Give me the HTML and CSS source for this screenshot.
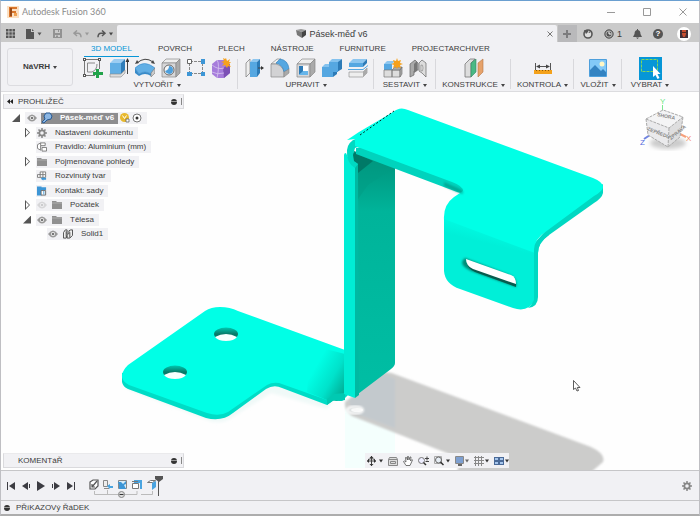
FILE: index.html
```
<!DOCTYPE html>
<html lang="cs">
<head>
<meta charset="utf-8">
<title>Autodesk Fusion 360</title>
<link rel="stylesheet" href="styles.css">
</head>
<body>
<div class="app">
  <header class="titlebar">
    <svg class="logo" width="12" height="12" viewBox="0 0 12 12"><path fill="#fbe0c4" d="M0 0h12v12H0z"/><path fill="#d9762c" d="M2 1h8v2H5v2h4v2H5v4H2z"/><path fill="#9a4a18" d="M3 2h2v8H3z"/><path fill="#f0a050" d="M7 7h3v3H7z"/></svg>
    <span class="app-name">Autodesk Fusion 360</span>
    <div class="window-buttons">
      <button aria-label="Minimalizovat"><svg width="8" height="8" viewBox="0 0 8 8"><path class="thin" d="M0 4.500h8"/></svg></button>
      <button aria-label="Maximalizovat"><svg width="8" height="8" viewBox="0 0 8 8"><path class="thin" d="M.5.5h7v7h-7z"/></svg></button>
      <button aria-label="Zavřít"><svg width="8" height="8" viewBox="0 0 8 8"><path class="thin" d="M.5.5l7 7M7.500.5l-7 7"/></svg></button>
    </div>
  </header>

  <div class="tabbar">
    <div class="quick">
      <button aria-label="Datový panel"><svg width="9" height="9" viewBox="0 0 9 9"><path fill="#555" d="M0 0h2.500v2.500H0zM3.300 0h2.500v2.500H3.300zM6.500 0H9v2.500H6.500zM0 3.300h2.500v2.500H0zM3.300 3.300h2.500v2.500H3.300zM6.500 3.300H9v2.500H6.500zM0 6.500h2.500V9H0zM3.300 6.500h2.500V9H3.300zM6.500 6.500H9V9H6.500z"/></svg></button>
      <button aria-label="Soubor"><svg width="17" height="10" viewBox="0 0 17 10"><path fill="#555" d="M0 0h5v3h3v7H0zM6 0l2 2H6z"/><path fill="#555" d="M11.500 3.500h4l-2 3z"/></svg></button>
      <button aria-label="Uložit"><svg width="9" height="9" viewBox="0 0 9 9"><path fill="#929292" fill-rule="evenodd" d="M0 0h9v9H0zM2 1v3h5V1zM2 6v2h5V6z"/><path fill="#929292" d="M5 1h1v2H5zM3 6.500h2V8H3z"/></svg></button>
      <button aria-label="Zpět"><svg width="17" height="8" viewBox="0 0 17 8"><path fill="none" stroke="#999" stroke-width="1.500" d="M4 .5L1 3.200 4 6M1 3.200h4q3 0 3 4"/><path fill="#999" d="M12 2.500h4l-2 3z"/></svg></button>
      <button aria-label="Znovu"><svg width="17" height="8" viewBox="0 0 17 8"><path fill="none" stroke="#555" stroke-width="1.500" d="M5 .5l3 2.700L5 6M8 3.200H4q-3 0-3 4"/><path fill="#444" d="M12 2.500h4l-2 3z"/></svg></button>
    </div>
    <div class="doc-tab">
      <span class="doc-title"><svg width="10" height="9" viewBox="0 0 10 9"><path fill="#999" d="M0 1l5-1 5 1-4 2z"/><path fill="#777" d="M0 1l6 2v6L1 6z"/><path fill="#444" d="M6 3l4-2v5L6 9z"/></svg>Pásek-měď v6</span>
      <button class="tab-close" aria-label="Zavřít kartu"><svg width="6" height="6" viewBox="0 0 6 6"><path fill="none" stroke="#777" d="M.5.5l5 5M5.500.5l-5 5"/></svg></button>
    </div>
    <button class="new-tab" aria-label="Nový návrh"><svg width="8" height="8" viewBox="0 0 8 8"><path fill="#7c7c7e" d="M3 0h2v3h3v2H5v3H3V5H0V3h3z"/></svg></button>
    <div class="account">
      <button aria-label="Rozšíření"><svg width="10" height="10" viewBox="0 0 10 10"><circle cx="5" cy="5" r="4" fill="#ddd" stroke="#555" stroke-width="1.600"/><path fill="#555" d="M1 1h4v2L3 5zM5 3l3-1-1 2z"/></svg></button>
      <button class="jobs"><svg width="10" height="10" viewBox="0 0 10 10"><circle cx="5" cy="5" r="4.200" fill="#777" stroke="#555"/><circle cx="5" cy="5" r="3" fill="#555" stroke="#ccc" stroke-width=".7"/><path fill="none" stroke="#fff" d="M5 2.500V5h2.500"/></svg>1</button>
      <button aria-label="Oznámení"><svg width="9" height="10" viewBox="0 0 9 10"><path fill="#555" d="M4 0h1v1q2.500.5 2.500 4L9 8H0l1.500-3q0-3.500 2.500-4zM3 8.500h3L4.500 10z"/></svg></button>
      <button class="help" aria-label="Nápověda">?</button>
      <button class="avatar" aria-label="Profil"><svg width="14" height="14" viewBox="0 0 14 14"><circle cx="7" cy="7" r="7" fill="#fff"/><path fill="#403038" d="M3 3h8v8H3z"/><path fill="#c85032" d="M5 3h4v4l-1 3H6L5 7z"/><path fill="#5a2a20" d="M5 5h4v1H5z"/></svg></button>
    </div>
  </div>

  <div class="ribbon">
    <button class="workspace">NáVRH<i class="caret"></i></button>
    <div class="ribbon-main">
      <nav class="ribbon-tabs">
        <a class="active" href="#">3D MODEL</a><a href="#">POVRCH</a><a href="#">PLECH</a><a href="#">NÁSTROJE</a><a href="#">FURNITURE</a><a href="#">PROJECTARCHIVER</a>
      </nav>
      <div class="groups">
        <section class="group create">
          <div class="icons">
            <svg width="20" height="20" viewBox="0 0 20 20"><path fill="none" stroke="#777" d="M2 1.500h14M2 17.500h10M1.500 2v15M16.500 2v9"/><path fill="none" stroke="#888" d="M4.500 5h7.500M4.500 5v9H9q5-2 5-8"/><path fill="#555" d="M0 0h3v3H0zM15 0h3v3h-3zM0 16h3v3H0z"/><path fill="#fff" d="M1 1h1v1H1zM16 1h1v1h-1zM1 17h1v1H1z"/><path fill="#22a34a" d="M13 11h3v3h4v3h-4v3h-3v-3h-3v-3h3z"/></svg>
            <svg width="20" height="20" viewBox="0 0 20 20"><path fill="#9ccdf2" d="M1 5l4-4h11l-4 4z"/><path fill="#62afe5" d="M1 5h11v11H1z"/><path fill="#2f7db9" d="M12 5l4-4v11l-4 4z"/><path fill="#ddd" stroke="#888" stroke-width=".6" d="M1 16h11l4-4v3l-4 4H1z"/><path stroke="#444" d="M18.500 2v14"/><path fill="#333" d="M18.500 0l2 4h-4z"/></svg>
            <svg width="20" height="20" viewBox="0 0 20 20"><path fill="none" stroke="#444" d="M2 5q8-7 16-1"/><path fill="#444" d="M0 6l2-4 2 3zM20 6l-4-1 2-3z"/><path fill="#62afe5" stroke="#398ccc" stroke-width=".6" d="M0 10q9-9 20 0l-4 6q-6-4-12 0z"/><path fill="#388bc9" d="M0 10l4 6v2l-4-3zM16 16q-6-4-12 0v2q6-4 12 0z"/><path fill="#ccc" stroke="#777" stroke-width=".6" d="M20 10v5l-4 4v-4z"/></svg>
            <svg width="20" height="20" viewBox="0 0 20 20"><path fill="#eee" stroke="#888" stroke-width=".7" d="M1 5l4-4h14l-4 4z"/><path fill="#d7d7d9" stroke="#888" stroke-width=".7" d="M1 5h14v14H1z"/><path fill="#aaa" stroke="#888" stroke-width=".7" d="M15 5l4-4v14l-4 4z"/><circle cx="8" cy="12" r="5" fill="#f8f8f8" stroke="#666"/><path fill="#4d9fdc" d="M8 8a4 4 0 0 1 0 8 5 5 0 0 1-4-3 5 5 0 0 0 4-5z"/></svg>
            <svg width="18" height="20" viewBox="0 0 18 20"><path fill="none" stroke="#888" stroke-dasharray="3 1" d="M3 3.500h12M3 15.500h12M2.500 5v10M15.500 5v10"/><path fill="#fff" stroke="#666" d="M.5 1.500h4v4h-4z"/><path fill="#3d96d6" d="M14 1h4v5h-4zM0 14h5v4H0zM14 14h4v4h-4z"/></svg>
            <svg width="20" height="20" viewBox="0 0 20 20"><path fill="#a67cdb" d="M1 6l5-4h8l5 4v9l-6 5H6l-5-4z"/><path fill="#7c50b5" d="M12 10l7-4v9l-6 5z"/><path fill="none" stroke="#d6c4ef" stroke-width=".8" d="M1 7q6 5 12 3M6 2q3 4 0 18M1 14q5 3 12 1"/><path fill="#f6a11c" d="M15 0l1 3 3-2-1 3h2l-2 2 2 3-3-1-1 2-2-3-3 1 2-3-3-1 3-1-1-3 2 1z"/></svg>
          </div>
          <button class="group-label">VYTVOŘIT<i class="caret"></i></button>
        </section>
        <section class="group modify">
          <div class="icons">
            <svg width="20" height="20" viewBox="0 0 20 20"><path fill="#eee" stroke="#777" stroke-width=".7" d="M2 5l4-4v14l-4 4z"/><path fill="#8dc6ef" d="M6 4l3-3h7l-3 3z"/><path fill="#55a7e1" d="M6 4h7v15H6z"/><path fill="#2d7bb7" d="M13 4l3-3v14l-3 4z"/><path stroke="#444" d="M14 10h4"/><path fill="#333" d="M17 8l3 2-3 2z"/></svg>
            <svg width="20" height="20" viewBox="0 0 20 20"><path fill="#eee" stroke="#888" stroke-width=".7" d="M1 6l6-5h4l-5 5z"/><path fill="#d2d2d4" stroke="#888" stroke-width=".7" d="M1 6h5q7 2 8 8v5H1z"/><path fill="#55a7e1" stroke="#2d7bb7" stroke-width=".6" d="M6 5l4-4q8 1 9 10l-5 3q-1-7-8-9z"/><path fill="#aaa" stroke="#888" stroke-width=".6" d="M14 14l5-3v4l-5 4z"/></svg>
            <svg width="20" height="20" viewBox="0 0 20 20"><path fill="#eee" stroke="#888" stroke-width=".7" d="M1 6l5-5h13l-5 5z"/><path fill="#d7d7d9" stroke="#888" stroke-width=".7" d="M1 6h13v13H1z"/><path fill="#aaa" stroke="#888" stroke-width=".7" d="M14 6l5-5v13l-5 5z"/><path fill="#fff" d="M3 8h9v9H3z"/><path fill="#2d7bb7" d="M3 8h4v6l-4 3z"/><path fill="#66b5ea" d="M7 13h5v4H3z"/></svg>
            <svg width="20" height="20" viewBox="0 0 20 20"><path fill="#84c2ee" d="M7 4l3-3h10l-4 4-4 4H0l3-3h4z"/><path fill="#55a7e1" d="M7 4h9v10h-5v5H0V9h7z"/><path fill="#2d7bb7" d="M16 4l4-3v10l-5 3v2l-4 3v-5h5z"/></svg>
            <svg width="20" height="20" viewBox="0 0 20 20"><path fill="#8dc6ef" d="M1 5l4-4h14l-4 4z"/><path fill="#55a7e1" d="M1 5h14v4H1z"/><path fill="#2d7bb7" d="M15 5l4-4v4l-4 4z"/><path fill="none" stroke="#55a7e1" d="M0 11.500h15l5-4"/><path fill="#eee" stroke="#888" stroke-width=".6" d="M1 14h14l4-4v5l-4 4H1z"/><path fill="#aaa" d="M15 14l4-4v5l-4 4z"/></svg>
          </div>
          <button class="group-label">UPRAVIT<i class="caret"></i></button>
        </section>
        <section class="group assemble">
          <div class="icons">
            <svg width="20" height="20" viewBox="0 0 20 20"><path fill="#8dc6ef" d="M1 6l3-3h8l-3 3z"/><path fill="#55a7e1" d="M1 6h8v6H1z"/><path fill="#ddd" stroke="#777" stroke-width=".7" d="M1 12h8v7H1zM9 12h8v7H9z"/><path fill="#aaa" stroke="#777" stroke-width=".7" d="M9 12l3-3h7l-2 3zM17 12l2-3v7l-2 3z"/><path fill="#f6a11c" d="M14 0l1 3 3-1-1 3 3 1-3 1 1 3-3-1-1 2-1-2-3 1 1-3-3-1 3-1-1-3 3 1z"/></svg>
            <svg width="18" height="20" viewBox="0 0 18 20"><path fill="#aaa" stroke="#666" stroke-width=".7" d="M1 6l5-4 3 3v7l-4 1v4l-4 2z"/><path fill="#777" d="M5 6l3-3v10l-3 2z"/><path fill="#ddd" stroke="#666" stroke-width=".7" d="M17 5l-4-3-3 3v8l3 2 4 4z"/><path fill="#eee" stroke="#777" stroke-width=".6" d="M12 7q2-1 2 3t-2 3z"/></svg>
          </div>
          <button class="group-label">SESTAVIT<i class="caret"></i></button>
        </section>
        <section class="group">
          <div class="icons">
            <svg width="20" height="20" viewBox="0 0 20 20"><path fill="#ddd" stroke="#777" stroke-width=".8" d="M1 6l5-5h5L7 5v14H1z"/><path fill="#49b985" stroke="#34855f" stroke-width=".6" d="M7 5l5-4v13l-5 5z"/><path fill="#e6a26a" stroke="#b57545" stroke-width=".6" d="M14 5l5-4v13l-5 5z"/></svg>
          </div>
          <button class="group-label">KONSTRUKCE<i class="caret"></i></button>
        </section>
        <section class="group">
          <div class="icons">
            <svg width="18" height="20" viewBox="0 0 18 20"><path fill="none" stroke="#555" d="M1.500 5v7M16.500 5v7M3 8.500h12"/><path fill="#444" d="M2 8.500l4-2v4zM16 8.500l-4-2v4z"/><path fill="#f4a21b" d="M0 12h18v4H0z"/><path stroke="#8d5a08" d="M2.500 12v1M5.500 12v1M8.500 12v1M11.500 12v1M14.500 12v1"/></svg>
          </div>
          <button class="group-label">KONTROLA<i class="caret"></i></button>
        </section>
        <section class="group">
          <div class="icons">
            <svg width="18" height="20" viewBox="0 0 18 20"><path fill="#82c9f8" stroke="#4d9fdc" d="M.5 1.500h17v17H.5z"/><circle cx="13" cy="6" r="2.500" fill="#fff7c4"/><path fill="#3383c2" d="M1 12l5-5 6 6 2-2 3 3v4H1z"/></svg>
          </div>
          <button class="group-label">VLOŽIT<i class="caret"></i></button>
        </section>
        <section class="group">
          <div class="icons">
            <svg width="23" height="23" viewBox="0 0 23 23"><path fill="#0696d7" d="M0 0h23v23H0z"/><path fill="none" stroke="#82d85b" stroke-dasharray="3 1" d="M2.500 2.500h16v12h-16z"/><path fill="#fff" d="M14 9v11l2.500-2 2 4 2-1-2-4h3z"/></svg>
          </div>
          <button class="group-label">VYBRAT<i class="caret"></i></button>
        </section>
      </div>
    </div>
  </div>

  <main class="canvas">
    <svg class="scene" viewBox="1 92 698 378" role="img" aria-label="Model pásku">
      <defs>
        <linearGradient id="bend" gradientUnits="userSpaceOnUse" x1="316" y1="366" x2="351" y2="386"><stop offset="0" stop-color="#00ffe6"/><stop offset=".5" stop-color="#00e2cb"/><stop offset="1" stop-color="#00a58d"/></linearGradient>
        <linearGradient id="wall" x1="0" y1="0" x2="0" y2="1"><stop offset="0" stop-color="#008f78"/><stop offset=".25" stop-color="#00b49a"/><stop offset="1" stop-color="#00bea4"/></linearGradient>
        <linearGradient id="flap" gradientUnits="userSpaceOnUse" x1="494" y1="224" x2="489" y2="244"><stop offset="0" stop-color="#00ffe6"/><stop offset="1" stop-color="#00efd8"/></linearGradient>
        <linearGradient id="hole" x1="0" y1="0" x2="0" y2="1"><stop offset="0" stop-color="#00c8b0"/><stop offset=".5" stop-color="#087a69"/></linearGradient>
        <filter id="soft" x="-10%" y="-10%" width="120%" height="120%"><feGaussianBlur stdDeviation="1.500"/></filter>
        <filter id="edge" x="-20%" y="-20%" width="140%" height="140%"><feGaussianBlur stdDeviation="1"/></filter>
      </defs>
      <path fill="#f4fffd" d="M345 400h50v68h-50z"/>
      <path fill="#f0f9f8" filter="url(#soft)" d="M123 382l6 8 80 31q14 4 24-4l38-24 56 16 6-8-100-40z"/>
      <g filter="url(#edge)">
        <path fill="#cccccb" d="M345 402l36-29q8-2 16 2l194 72q15 7 12 15l-14 12H456q6-13 1-17L352 416q-8-6-7-14z"/>
        <path fill="#c3c9cd" d="M349 400l34-26 12 5v49l-43-16z"/>
      </g>
      <ellipse cx="355" cy="410" rx="8" ry="3.500" fill="#d8dcdc" stroke="#fff" stroke-width="2" filter="url(#edge)"/>
      <ellipse cx="357" cy="410" rx="6" ry="2" fill="#fff" opacity=".8"/>
      <path fill="#00dcc6" d="M122 373v9q1 5 6 7l78 29q16 4 27-5l33-24q8-5 16-1l45 17 7-5 8 1 6-6-4-20z"/>
      <path fill="#00ffe6" d="M205 311q6-4 15-4 10 0 18 4l107 39v44l-18 6-48-17q-7-1-12 2l-39 27q-9 5-21 1l-78-28q-11-6-5-15 1-2 4-5z"/>
      <path fill="url(#bend)" d="M310 345l35 9v44l-8 3-10-1-20-8z"/>
      <path fill="#00c9b2" d="M327 399l7-5 11-1v7l-5 1-6-1-7 5z"/>
      <g>
        <ellipse cx="226" cy="334" rx="12" ry="6.500" fill="url(#hole)"/><path fill="#f8fffe" d="M215 337q11-6 22 0-3 4-11 4t-11-4z"/>
        <ellipse cx="175" cy="372" rx="12" ry="6.500" fill="url(#hole)"/><path fill="#f8fffe" d="M164 375q11-6 22 0-3 4-11 4t-11-4z"/>
      </g>
      <path fill="url(#wall)" d="M354 151l41 15v197q0 3-4 6l-33 25z"/>
      <path fill="#009b83" opacity=".5" d="M358 155l37 13-5 2-22 15-10 14z"/>
      <path fill="#007967" d="M353 152l20 9-15 12-5-8z"/>
      <path fill="#00b9a2" d="M355 162l3 2 1 231-4 3z"/>
      <path fill="#00edd5" d="M344 155q0-2 2-2 3 8 9 10v235l-11-4z"/>
      <path fill="#00d9c2" d="M347 150l1-4q1-3 5-6l11-4v8l-9 4-2 7 1 6 4 3-3 4q-9-5-8-18z"/>
      <path fill="#00d3bd" d="M356 148v6l101 38q5 2 6 0l2-8-90-40z"/>
      <path fill="#00d8c2" d="M603 184v9q-1 5-9 10l-45 32q-11 7-11 18l-6 40-1-46 18-20 40-32z"/>
      <path fill="#00ffe6" d="M393 112q7-6 15-2l185 68q10 4 10 9 0 4-9 9l-46 34q-14 9-14 20v36l-90-66q-1-15 10-23l9-6q0-5-11-9l-97-36v-7l-8 1 12-8z"/>
      <path fill="#008f7c" filter="url(#edge)" opacity=".6" d="M444 182l9 4q9 3 10 6v2l-6-2-13-6z"/>
      <path fill="url(#flap)" d="M444 219l91 34v47q-7 13-22 8l-53-19q-15-5-16-18z"/>
      <path fill="#00d8c2" d="M548 232q-14 8-14 22v46q-2 5-6 8 10-1 10-11v-44q0-10 11-18z"/>
      <path fill="#008d79" filter="url(#edge)" d="M465 258l45 17q8 4 6 12l-45-16q-14-7-6-13z"/>
      <path fill="#075c4e" d="M467 260l49 23v4l-41-15q-9-4-8-12z"/>
      <path fill="#fff" d="M466 259l45 16q5 2 5 9l-43-15q-7-3-7-10z"/>
      <path fill="none" stroke="#062c26" stroke-dasharray="2 2" d="M360 135l34-24"/>
    </svg>

    <svg class="cube" width="60" height="58" viewBox="0 0 60 58">
      <defs><filter id="cs"><feGaussianBlur stdDeviation="2"/></filter></defs>
      <ellipse cx="28" cy="47" rx="18" ry="6" fill="#ccc" filter="url(#cs)"/>
      <path stroke="#7ce892" d="M22.500 9v9"/><path stroke="#7084e0" stroke-width="2" d="M4 43l6-4"/><path stroke="#f6a07c" stroke-width="2" d="M40 38l6 3"/>
      <path fill="#f4f4f5" d="M6 23l17-9 20 7-14 11z"/><path fill="#eaeaec" d="M6 23l23 9-1 19L8 39z"/><path fill="#dededf" d="M29 32l14-11-3 20-12 10z"/>
      <path fill="none" stroke="#aaa" stroke-dasharray="3 1" d="M6 23l17-9 20 7-14 11zM6 23l2 16 20 12 12-10 3-20M29 32l-1 19"/>
      <text class="axis" x="20" y="8" fill="#6ee687">Y</text><text class="axis" x="0" y="49" fill="#536bdc">Z</text><text class="axis" x="46" y="45" fill="#f58a60">X</text>
      <text class="face" transform="translate(7 34) rotate(22)">ZEPŘEDU</text><text class="face" transform="translate(31 44) rotate(-40)">ZPRAVA</text><text class="face" transform="translate(17 20) rotate(12)">SHORA</text>
    </svg>

    <aside class="browser">
      <div class="panel-head"><svg class="fold" width="6" height="5" viewBox="0 0 6 5"><path fill="#222" d="M3 0v5L0 2.500zM6 0v5L3 2.500z"/></svg><span>PROHLíŽEČ</span><i class="dot"></i><i class="grip"></i></div>
      <ul class="tree">
        <li class="root"><i class="open"></i><div class="pill"><svg class="eye"><use href="#eye"/></svg><span class="selected"><svg width="12" height="12" viewBox="0 0 12 12"><path fill="#8bb6e3" stroke="#285b95" d="M3 4l2-3h4l2 3-1 3-4 1-3 3-2-1 3-3z"/></svg><b>Pásek-měď v6</b></span><svg width="10" height="10" viewBox="0 0 10 10"><circle cx="4.500" cy="4.500" r="4.500" fill="#e8b92e"/><path fill="none" stroke="#fff" d="M2.500 2.500l2 3 2-3"/><path fill="#fff" stroke="#555" stroke-width=".7" d="M6 6h3v3H6z"/></svg><svg width="10" height="10" viewBox="0 0 10 10"><circle cx="5" cy="5" r="4" fill="#fff" stroke="#777"/><circle cx="5" cy="5" r="1.500" fill="#333"/></svg></div></li>
        <li class="child"><i class="closed"></i><div class="pill"><svg class="ico"><use href="#gear"/></svg><span>Nastavení dokumentu</span></div></li>
        <li class="child"><i></i><div class="pill"><svg class="ico" viewBox="0 0 11 10"><path fill="#fff" stroke="#777" d="M.5 2.500L4 .5h5v3H4v5L.5 6.500zM4 .5v3M5.500 5.500h5v4h-5z"/></svg><span>Pravidlo: Aluminium (mm)</span></div></li>
        <li class="child"><i class="closed"></i><div class="pill"><svg class="ico"><use href="#folder"/></svg><span>Pojmenované pohledy</span></div></li>
        <li class="child"><i></i><div class="pill"><svg class="ico" viewBox="0 0 11 10"><path fill="#fff" stroke="#777" d="M.5 3.500h3v-3h6v6h-9zM3.500 3.500v3M6.500.5v6M3 3.500h6"/><path fill="#3d96d6" d="M4 8l3-2v1h3v2H7v1z"/></svg><span>Rozvinutý tvar</span></div></li>
        <li class="child"><i></i><div class="pill"><svg class="ico" viewBox="0 0 11 10"><path fill="#3d96d6" d="M0 0h5v10H0zM5 1h5v3H5z"/><path fill="#fff" stroke="#666" d="M4.500 4.500h5v5h-5z"/><path stroke="#3d96d6" d="M7.500 5v4"/></svg><span>Kontakt: sady</span></div></li>
        <li class="child"><i class="closed"></i><div class="pill"><svg class="eye off"><use href="#eye"/></svg><svg class="ico"><use href="#folder"/></svg><span>Počátek</span></div></li>
        <li class="child"><i class="open"></i><div class="pill"><svg class="eye"><use href="#eye"/></svg><svg class="ico"><use href="#folder"/></svg><span>Tělesa</span></div></li>
        <li class="leaf"><div class="pill"><svg class="eye"><use href="#eye"/></svg><svg class="ico" viewBox="0 0 11 10"><path fill="#eee" stroke="#444" d="M.5 3.500l2-3h2v5l2-1v-3l2-1h2v6l-3 3h-3v-3l-1 3h-3z"/><path stroke="#444" d="M3.500 2v6M7.500 3v6"/></svg><span>Solid1</span></div></li>
      </ul>
    </aside>

    <div class="panel-head comments"><span>KOMENTáŘ</span><i class="dot"></i><i class="grip"></i></div>

    <div class="navbar">
      <button aria-label="Orbit"><svg width="16" height="10" viewBox="0 0 16 10"><path fill="none" stroke="#444" d="M4.500 0v10M0 5h9M1 3.500q3.500-2 7 0"/><path fill="#333" d="M4.500 0l2 2h-4zM4.500 10l2-2h-4zM0 5l2-2v4zM9 5L7 3v4zM12 3.500h4l-2 3z"/></svg></button>
      <button aria-label="Pohled na"><svg width="10" height="10" viewBox="0 0 10 10"><path fill="#ddd" stroke="#888" d="M.5 3.500l1-2h7l1 2v6h-9zM.5 3.500h9M2.500 5.500h5v2h-5z"/></svg></button>
      <button aria-label="Posun"><svg width="10" height="10" viewBox="0 0 10 10"><path fill="#fff" stroke="#555" stroke-width=".8" d="M3 9.500L.5 5.500l1-.5L3 6 2.500 1.500h1L4.500 4V.5h1L6 4l1-3h1L7.500 5 9 3.500l.5.5L7 9.500z"/></svg></button>
      <button aria-label="Lupa"><svg width="11" height="10" viewBox="0 0 11 10"><circle cx="3.500" cy="4.500" r="3" fill="#eef" stroke="#777"/><path stroke="#333" stroke-width="1.500" d="M5.500 6.500L8 9"/><path stroke="#444" d="M7 2.500h4M9 .5v4M7.500 5.500H11"/></svg></button>
      <button aria-label="Přizpůsobit"><svg width="16" height="10" viewBox="0 0 16 10"><path fill="none" stroke="#aaa" d="M.5.5h7v7h-7z"/><circle cx="4.500" cy="4" r="3" fill="#e6edf4" stroke="#666"/><path stroke="#333" stroke-width="1.500" d="M6.500 6l3 3"/><path fill="#333" d="M12 3.500h4l-2 3z"/></svg></button>
      <button aria-label="Zobrazení"><svg width="14" height="10" viewBox="0 0 14 10"><path fill="#fff" stroke="#888" d="M.5.5h8v7h-8z"/><path fill="#7d9fd0" d="M1 1h7v6H1z"/><path fill="#666" d="M3 8h4v2H3zM10 3.500h4l-2 3z"/></svg></button>
      <button aria-label="Mřížka"><svg width="15" height="10" viewBox="0 0 15 10"><path stroke="#888" d="M1.500 0v10M4.500 0v10M7.500 0v10M0 1.500h10M0 4.500h10M0 7.500h10"/><path fill="#333" d="M11 3.500h4l-2 3z"/></svg></button>
      <button aria-label="Výřezy"><svg width="15" height="10" viewBox="0 0 15 10"><path fill="#4a6a98" d="M0 1h10v8H0z"/><path fill="#a5c5ec" d="M1 2h3v2H1zM6 2h3v2H6zM1 6h3v2H1zM6 6h3v2H6z"/><path fill="#333" d="M11 3.500h4l-2 3z"/></svg></button>
    </div>
    <svg class="pointer" width="8" height="12" viewBox="0 0 8 12"><path fill="#fff" stroke="#333" stroke-width=".8" d="M.5.5v9l2-1.500 1.500 3 1.500-.5L4.300 7.500H7z"/></svg>
  </main>

  <div class="timeline">
    <div class="playback">
      <button aria-label="Na začátek"><svg width="8" height="8" viewBox="0 0 8 8"><path fill="#3c3c42" d="M0 0h1v8H0zM8 0v8L2 4z"/></svg></button>
      <button aria-label="Krok zpět"><svg width="8" height="8" viewBox="0 0 8 8"><path fill="#3c3c42" d="M6 0v8L0 4zM7 2h1v4H7z"/></svg></button>
      <button aria-label="Přehrát"><svg width="8" height="10" viewBox="0 0 8 10"><path fill="#3c3c42" d="M0 0l8 5-8 5z"/></svg></button>
      <button aria-label="Krok vpřed"><svg width="8" height="8" viewBox="0 0 8 8"><path fill="#3c3c42" d="M2 0l6 4-6 4zM0 2h1v4H0z"/></svg></button>
      <button aria-label="Na konec"><svg width="8" height="8" viewBox="0 0 8 8"><path fill="#3c3c42" d="M7 0h1v8H7zM0 0l6 4-6 4z"/></svg></button>
    </div>
    <svg class="features" width="76" height="24" viewBox="88 474 76 24" aria-label="Časová osa">
      <path fill="none" stroke="#bbb" d="M94.500 491v3.500h42.500V491M141 494.500h11.500V491M107.500 490v4"/>
      <path fill="#fff" stroke="#555" stroke-width="1.200" d="M90 482l3-2h5v6l-3 3h-5z"/><path fill="none" stroke="#555" stroke-width="1.200" d="M92 487l5-6M92 484v3h3"/>
      <path fill="#eee" stroke="#888" d="M103.500 480.500h4v6h-4z"/><path fill="none" stroke="#888" d="M104 488.500h5"/><path fill="#4aa4e0" d="M107 486l3-2v2h3v2h-3v1z"/>
      <path fill="#d9edf9" stroke="#888" d="M118.500 480.500h8v8h-8z"/><path fill="#3d96d6" d="M118 482h3l2 2 3-3v3l-2 1 2 4h-7v-4z"/>
      <path fill="#4aa4e0" d="M134 480h8v9h-2v-6h-6z"/><path fill="#fff" stroke="#777" d="M132.500 483.500h6v5h-6zM132 481.500h6"/>
      <path fill="#fff" stroke="#777" d="M147.500 482.500l3-2h5l-3 2z"/><path fill="#4aa4e0" d="M152 483l4-2v6l-4 3z"/>
      <path fill="#555" d="M155 476h8v3l-4 3-4-3zM158 480h1v16h-1z"/>
      <circle cx="121.500" cy="494.500" r="3" fill="#ddd" stroke="#888"/><path stroke="#333" d="M119.500 494.500h4"/>
    </svg>
    <button class="settings" aria-label="Nastavení"><svg class="ico"><use href="#gear"/></svg></button>
  </div>
  <footer class="command"><i class="dot"></i>PŘíKAZOVý ŘáDEK</footer>
</div>

<svg class="symbols">
  <symbol id="eye" viewBox="0 0 10 8"><path fill="#999" d="M0 4q5-7 10 0-5 7-10 0z"/><circle cx="5" cy="4" r="2" fill="#fff"/><circle cx="5" cy="4" r="1.300" fill="#777"/></symbol>
  <symbol id="gear" viewBox="0 0 10 10"><circle cx="5" cy="5" r="2.700" fill="none" stroke="#868686" stroke-width="1.800"/><path stroke="#868686" stroke-width="1.500" d="M5 0v2M5 8v2M0 5h2M8 5h2M1.500 1.500l1.400 1.400M7.100 7.100l1.400 1.400M1.500 8.500l1.400-1.400M7.100 2.900l1.400-1.400"/></symbol>
  <symbol id="folder" viewBox="0 0 10 8"><path fill="#909090" d="M0 0h4l1 1h5v7H0z"/><path stroke="#ccc" stroke-width=".5" d="M0 2h10"/></symbol>
</svg>
</body>
</html>
```
FILE: styles.css
```
* { box-sizing: border-box; }

body {
  margin: 0;
  font-family: "Liberation Sans", Arial, sans-serif;
  font-size: 8px;
  line-height: 12px;
  color: #3c3c3c;
}

svg { display: block; flex: none; }
button {
  display: flex;
  align-items: center;
  padding: 0;
  border: 0;
  background: none;
  color: inherit;
  font: inherit;
}
a { color: inherit; text-decoration: none; }
.symbols { position: absolute; width: 0; height: 0; }

.app {
  display: flex;
  flex-direction: column;
  min-height: 100vh;
  border: 1px solid #bfbfc3;
  border-top-color: #6a9fd0;
  border-bottom: 2px solid #adadad;
  background: #fefefe;
}

/* title bar */
.titlebar {
  display: flex;
  align-items: center;
  height: 22px;
  padding: 0 12px 0 6px;
  gap: 3px;
}
.app-name {
  font: 9px/12px Lato, sans-serif;
  color: #8b8b8b;
}
.window-buttons { display: flex; gap: 28px; margin-left: auto; }
.thin { fill: none; stroke: #999; }

/* document tabs */
.tabbar {
  display: flex;
  height: 19px;
  padding-top: 2px;
  background: #cacaca;
}
.quick {
  display: flex;
  align-items: center;
  width: 116px;
  gap: 7px;
  padding-left: 5px;
}
.quick button:first-child { margin-right: 4px; }
.quick button:nth-child(3) { margin: 0 4px 0 3px; }
.doc-tab {
  flex: 1;
  display: flex;
  align-items: center;
  padding-right: 4px;
  border-radius: 2px 2px 0 0;
  background: #f1f1f4;
}
.doc-title {
  display: flex;
  flex: 1;
  align-items: center;
  justify-content: center;
  gap: 3px;
  font-size: 9px;
}
.new-tab { justify-content: center; width: 19px; margin: 0 4px 0 1px; background: #b9b9bb; }
.account { display: flex; align-items: center; gap: 11px; padding: 0 8px 0 2px; }
.jobs { gap: 3px; font-size: 9px; }
.help {
  justify-content: center;
  width: 10px;
  height: 10px;
  margin-right: 3px;
  border-radius: 50%;
  background: #555;
  color: #fff;
  font-weight: bold;
}

/* ribbon */
.ribbon {
  display: flex;
  height: 50px;
  border-bottom: 1px solid #dcdcdf;
  background: #f1f1f4;
}
.workspace {
  justify-content: center;
  width: 66px;
  height: 38px;
  margin: 6px 3px 0 6px;
  border: 1px solid #dcdce0;
  border-radius: 3px;
  font-weight: bold;
}
.caret {
  margin-left: 3px;
  border: 2px solid transparent;
  border-top: 3px solid #444;
  border-bottom: 0;
}
.ribbon-main { flex: 1; }
.ribbon-tabs { display: flex; gap: 26px; padding-left: 15px; height: 15px; }
.ribbon-tabs a { position: relative; padding-top: 1px; }
.ribbon-tabs .active { color: #0696d7; }
.ribbon-tabs .active::after {
  content: "";
  position: absolute;
  left: -7px;
  right: -7px;
  bottom: 0;
  height: 1px;
  background: #0696d7;
}
.groups {
  display: grid;
  grid-template-columns: 162px 136px 62px 75px 63px 48px 56px;
  height: 34px;
}
.group {
  position: relative;
  display: flex;
  flex-direction: column;
  align-items: center;
}
.group:not(:last-child)::after {
  content: "";
  position: absolute;
  right: 0;
  top: 2px;
  height: 30px;
  border-right: 1px solid #d8d8dc;
}
.icons { display: flex; align-items: center; justify-content: center; gap: 6px; height: 22px; }
.group-label { height: 12px; }

/* canvas */
.canvas {
  position: relative;
  flex: 1;
  display: flex;
  flex-direction: column;
  justify-content: space-between;
  padding: 2px;
  overflow: hidden;
}
.scene { position: absolute; inset: 0; width: 100%; height: 100%; }
.cube { position: absolute; top: 4px; right: -1px; }
.axis { font-size: 8px; }
.face { font-size: 5px; font-weight: bold; fill: #888; }
.browser { position: relative; }
.panel-head {
  position: relative;
  display: flex;
  align-items: center;
  width: 181px;
  height: 15px;
  padding: 0 1px 0 14px;
  border: 1px solid #dadadd;
  border-top-color: #eaeaec;
  background: #f1f1f4;
}
.fold { position: absolute; left: 3px; }
.dot {
  width: 6px;
  height: 6px;
  border-radius: 50%;
  background: linear-gradient(#333 2px, #999 2px 3px, #333 3px);
}
.panel-head .dot { margin-left: auto; margin-right: 4px; }
.grip { width: 1px; height: 7px; background: #888; }
.tree {
  display: flex;
  flex-direction: column;
  justify-content: space-between;
  height: 128px;
  margin: 3px 0 0;
  padding: 0 0 0 9px;
  list-style: none;
}
.tree li { display: flex; align-items: center; height: 12px; }
.tree li > i { position: relative; width: 13px; height: 10px; }
.tree .child { padding-left: 11px; }
.tree .leaf { padding-left: 35px; }
.closed::after {
  content: "";
  position: absolute;
  left: 2px;
  width: 5px;
  height: 10px;
  background: #555;
  clip-path: polygon(0 0, 100% 50%, 0 100%, 0 0, 1px 2px, 1px 8px, 4px 5px, 1px 2px);
}
.open::after {
  content: "";
  position: absolute;
  left: 0;
  top: 1px;
  width: 8px;
  height: 8px;
  background: #555;
  clip-path: polygon(100% 0, 100% 100%, 0 100%);
}
.pill {
  display: flex;
  align-items: center;
  height: 12px;
  padding: 0 5px 0 1px;
  background: #f1f1f4;
}
.root .pill { gap: 2px; padding-left: 2px; }
.pill > span:last-child { margin-left: 8px; }
.ico { width: 10px; height: 10px; }
.eye { width: 10px; height: 8px; }
.eye + .ico { margin-left: 5px; }
.off { opacity: .3; }
.selected {
  display: flex;
  align-items: center;
  height: 11px;
  padding-right: 4px;
  gap: 7px;
  margin-left: 2px;
  background: #8d8d8f;
  color: #fff;
}
.navbar {
  position: absolute;
  left: 364px;
  bottom: 2px;
  display: flex;
  align-items: center;
  gap: 5px;
  height: 15px;
  padding: 0 0 0 2px;
  background: #f1f1f4;
}
.pointer { position: absolute; left: 572px; top: 288px; }

/* timeline and command line */
.timeline {
  display: flex;
  align-items: center;
  height: 31px;
  padding: 0 7px 0 6px;
  border-top: 1px solid #c6c6c8;
  border-bottom: 1px solid #c6c6c8;
  background: #f1f1f4;
}
.playback { display: flex; align-items: center; gap: 7px; }
.features { margin-left: 13px; }
.settings { margin-left: auto; }
.command {
  display: flex;
  align-items: center;
  gap: 6px;
  height: 13px;
  padding-left: 3px;
  background: #f1f1f4;
}
```
